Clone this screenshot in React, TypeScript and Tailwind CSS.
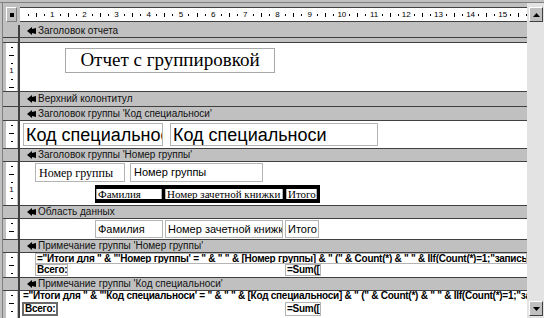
import type { ReactNode } from "react";

const sans = "font-['Liberation_Sans',Arial,sans-serif]";
const serif = "font-['Liberation_Serif','Times_New_Roman',serif]";

function Slot({ children }: { children: ReactNode }) {
    return <div className="w-1/4 flex items-center justify-center">{children}</div>;
}

function HRuler() {
    const cells = Array.from({ length: 16 }, (_, i) => i + 1);
    return (
        <div className="flex-1 h-full bg-white border-y border-[#404040] overflow-hidden flex pl-[4px]">
            {cells.map(n => (
                <div key={n} className="w-[32.2px] shrink-0 flex">
                    <Slot><span className="w-px h-[2px] bg-black" /></Slot>
                    <Slot><span className="w-px h-[4px] bg-black" /></Slot>
                    <Slot><span className="w-px h-[2px] bg-black" /></Slot>
                    <Slot><span className="text-[8px] leading-none">{n}</span></Slot>
                </div>
            ))}
        </div>
    );
}

function VMarks({ n }: { n: number }) {
    const marks = Array.from({ length: n }, (_, i) => i + 1);
    return (
        <div className="flex flex-col">
            {marks.map(i => (
                <div key={i} className="h-[8px] w-[11px] flex items-center justify-center">
                    {i % 4 === 2 && <span className="w-[5px] h-px bg-black" />}
                    {i % 2 === 1 && <span className="w-[2px] h-px bg-black" />}
                    {i % 4 === 0 && <span className="text-[8px] leading-none">{i / 4}</span>}
                </div>
            ))}
        </div>
    );
}

function SectionIcon() {
    return (
        <svg width="9" height="8" viewBox="0 0 9 8" className="shrink-0">
            <path d="M0 4 L5 0 L5 2 L9 1 L9 7 L5 6 L5 8 Z" fill="#000" />
        </svg>
    );
}

interface RowProps {
    className: string;
    bar?: boolean;
    marks?: number;
    children?: ReactNode;
}

function Row({ className, bar = false, marks = 0, children }: RowProps) {
    const bg = bar ? "bg-[#c0c0c0]" : "bg-white";
    return (
        <div className={`flex shrink-0 ${className}`}>
            <div className="w-[3px] shrink-0" />
            <div className={`w-[11px] shrink-0 overflow-hidden ${bg}`}>
                {marks > 0 && <VMarks n={marks} />}
            </div>
            <div className="w-[3px] shrink-0 border-r-2 border-[#404040]" />
            <div className={`flex-1 min-w-0 overflow-hidden ${bg}`}>{children}</div>
        </div>
    );
}

function Bar({ title, className }: { title: string; className: string }) {
    return (
        <Row className={className} bar>
            <div className="h-full flex items-center pl-[7px] gap-[2px]">
                <SectionIcon />
                <span className="text-[10px] leading-none text-[#111] whitespace-nowrap">{title}</span>
            </div>
        </Row>
    );
}

function ScrollButton({ down = false }: { down?: boolean }) {
    return (
        <div className="w-[14px] h-[15px] bg-[#c0c0c0] border border-t-white border-l-white border-b-[#404040] border-r-[#404040] flex items-center justify-center">
            <svg width="7" height="4" viewBox="0 0 7 4">
                <path d={down ? "M0 0 L7 0 L3.5 4 Z" : "M0 4 L7 4 L3.5 0 Z"} fill="#000" />
            </svg>
        </div>
    );
}

const box = "border border-[#b4b4b4] bg-white overflow-hidden whitespace-nowrap flex items-center";

export default function App() {
    const totalsGroup = `="Итоги для " & "'Номер группы' = " & " " & [Номер группы] & " (" & Count(*) & " " & IIf(Count(*)=1;"запись";"записей") & ")"`;
    const totalsSpec = `="Итоги для " & "'Код специальноси' = " & " " & [Код специальноси] & " (" & Count(*) & " " & IIf(Count(*)=1;"запись";"записей") & ")"`;

    return (
        <div className={`w-[544px] h-[318px] bg-[#c0c0c0] overflow-hidden flex flex-col text-black ${sans}`}>
            <div className="h-[2px] shrink-0" />
            <div className="h-px shrink-0 bg-[#808080]" />
            <div className="flex flex-1 min-h-0">
                <div className="w-[2px] shrink-0" />
                <div className="w-px shrink-0 bg-[#808080]" />
                <div className="w-[524px] shrink-0 flex flex-col pt-[4px]">
                    {/* ruler */}
                    <div className="flex h-[15px] shrink-0">
                        <div className="w-[3px] shrink-0" />
                        <div className="w-[11px] shrink-0 bg-[#c0c0c0] border border-t-white border-l-white border-b-[#808080] border-r-[#808080] flex items-center justify-center">
                            <span className="w-[4px] h-[4px] bg-black" />
                        </div>
                        <div className="w-[3px] shrink-0" />
                        <HRuler />
                    </div>
                    <div className="h-[3px] shrink-0" />

                    <Bar title="Заголовок отчета" className="h-[12px]" />
                    <Row className="h-[6px] border-y border-[#404040]" bar />
                    <Row className="h-[48px]" marks={6}>
                        <div className="pt-[5px] pl-[45px]">
                            <div className={`w-[210px] h-[25px] border border-[#a8a8a8] flex items-center justify-center text-[19px] ${serif}`}>
                                Отчет с группировкой
                            </div>
                        </div>
                    </Row>

                    <Bar title="Верхний колонтитул" className="h-[15px] border-t border-[#404040]" />
                    <Bar title="Заголовок группы 'Код специальноси'" className="h-[14px] border-t border-[#404040]" />
                    <Row className="h-[28px] border-t border-[#404040]" marks={3}>
                        <div className="flex pt-[2px] pl-[3px] gap-[7px]">
                            <div className={`${box} w-[140px] h-[23px] px-[2px] text-[18px] leading-none`}>Код специальноси</div>
                            <div className={`${box} w-[208px] h-[23px] px-[2px] text-[18px] leading-none`}>Код специальноси</div>
                        </div>
                    </Row>

                    <Bar title="Заголовок группы 'Номер группы'" className="h-[13px] border-t border-[#404040]" />
                    <Row className="h-[44px] border-t border-[#404040]" marks={5}>
                        <div className="pt-[1px]">
                            <div className="flex pl-[15px] gap-[5px]">
                                <div className={`${box} w-[90px] h-[19px] px-[3px] text-[12px] ${serif}`}>Номер группы</div>
                                <div className={`${box} w-[133px] h-[19px] px-[3px] text-[11px]`}>Номер группы</div>
                            </div>
                            <div className={`mt-[3px] ml-[75px] w-[225px] h-[18px] bg-black py-[4px] pl-[1px] flex gap-[3px] ${serif}`}>
                                <div className="w-[66px] h-[10px] bg-white border-x border-[#b0b0b0] px-[1px] text-[11px] leading-[10px] overflow-hidden whitespace-nowrap">Фамилия</div>
                                <div className="w-[118px] h-[10px] bg-white border-x border-[#b0b0b0] px-[1px] text-[11px] leading-[10px] overflow-hidden whitespace-nowrap">Номер зачетной книжки</div>
                                <div className="w-[31px] h-[10px] bg-white border-x border-[#b0b0b0] px-[1px] text-[11px] leading-[10px] overflow-hidden whitespace-nowrap">Итого</div>
                            </div>
                        </div>
                    </Row>

                    <Bar title="Область данных" className="h-[13px] border-t border-[#404040]" />
                    <Row className="h-[21px] border-t border-[#404040]" marks={2}>
                        <div className="flex pt-[1px] pl-[75px] gap-[2px]">
                            <div className={`${box} w-[68px] h-[18px] px-[2px] text-[11px]`}>Фамилия</div>
                            <div className={`${box} w-[118px] h-[18px] px-[2px] text-[11px]`}>Номер зачетной книжки</div>
                            <div className={`${box} w-[34px] h-[18px] px-[2px] text-[11px]`}>Итого</div>
                        </div>
                    </Row>

                    <Bar title="Примечание группы 'Номер группы'" className="h-[13px] border-t border-[#404040]" />
                    <Row className="h-[25px] border-t border-[#404040]" marks={3}>
                        <div className="pl-[15px] font-bold text-[10px] tracking-[-0.25px]">
                            <div className={`${box} h-[11px] px-[1px] leading-none`}>{totalsGroup}</div>
                            <div className="flex h-[12px]">
                                <div className={`${box} w-[33px] px-[1px] leading-none`}>Всего:</div>
                                <div className="w-[217px]" />
                                <div className={`${box} w-[36px] px-[1px] leading-none`}>=Sum([Итого])</div>
                            </div>
                        </div>
                    </Row>

                    <Bar title="Примечание группы 'Код специальноси'" className="h-[13px] border-t border-[#404040]" />
                    <Row className="h-[28px] border-t border-[#404040]" marks={3}>
                        <div className="pl-[2px] font-bold text-[10px] tracking-[-0.25px]">
                            <div className="h-[10px] px-[1px] leading-[10px] overflow-hidden whitespace-nowrap">{totalsSpec}</div>
                            <div className="flex h-[14px] mt-[1px]">
                                <div className="w-[36px] border-2 border-[#6a6a6a] px-[1px] flex items-center leading-none whitespace-nowrap overflow-hidden">Всего:</div>
                                <div className="w-[227px]" />
                                <div className={`${box} w-[36px] px-[1px] leading-none`}>=Sum([Итого])</div>
                            </div>
                        </div>
                    </Row>
                </div>

                {/* vertical scrollbar */}
                <div className="flex-1 flex flex-col bg-[#e3e3e3] pt-[4px] pb-[2px] pl-[2px]">
                    <ScrollButton />
                    <div className="flex-1" />
                    <ScrollButton down />
                </div>
            </div>
        </div>
    );
}
